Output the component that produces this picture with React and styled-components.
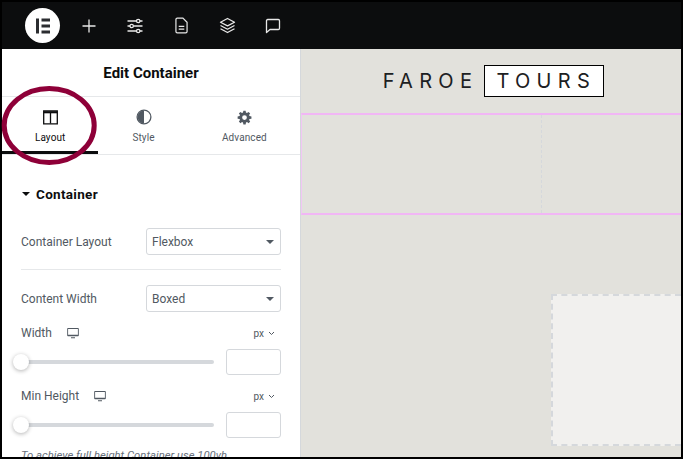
import React from 'react'
import styled, { createGlobalStyle } from 'styled-components'

const Global = createGlobalStyle`
  html, body { margin: 0; padding: 0; background: #000; }
  * { box-sizing: border-box; }
  body { font-family: Roboto, "Liberation Sans", sans-serif; }
`

const Frame = styled.div`
  position: relative;
  width: 683px;
  height: 459px;
  overflow: hidden;
  display: flex;
  flex-direction: column;
  padding: 2px 2px 2px 2px;
  background: #000;
`

const TopBar = styled.div`
  height: 47px;
  flex: none;
  background: #0c0d0e;
  display: flex;
  align-items: center;
  padding-left: 23px;
`

const Logo = styled.div`
  width: 35px;
  height: 35px;
  border-radius: 50%;
  background: #fff;
  display: flex;
  align-items: center;
  justify-content: center;
  margin-right: 19px;
`

const BarIcon = styled.div`
  width: 20px;
  height: 20px;
  margin-right: 26px;
  display: flex;
  align-items: center;
  justify-content: center;
  color: #e8e8e8;
`

const Main = styled.div`
  flex: 1;
  min-height: 0;
  display: flex;
`

const Panel = styled.div`
  width: 299px;
  flex: none;
  background: #fff;
  border-right: 1px solid #d5d8dc;
  overflow: hidden;
`

const PanelTitle = styled.div`
  height: 48px;
  display: flex;
  align-items: center;
  justify-content: center;
  font-size: 15px;
  font-weight: 700;
  color: #0c0d0e;
  border-bottom: 1px solid #e6e8ea;
`

const Tabs = styled.div`
  height: 58px;
  display: flex;
  border-bottom: 1px solid #e6e8ea;
`

const Tab = styled.div`
  width: ${p => p.$w}px;
  height: 57px;
  display: flex;
  flex-direction: column;
  align-items: center;
  padding-top: 12px;
  gap: 7px;
  font-size: 10px;
  letter-spacing: 0.1px;
  color: ${p => (p.$active ? '#0c0d0e' : '#515962')};
  border-bottom: ${p => (p.$active ? '3px solid #0c0d0e' : 'none')};
`

const TabIcon = styled.div`
  height: 16px;
  display: flex;
  align-items: center;
`

const Section = styled.div`
  padding: 0 19px;
`

const SectionHead = styled.div`
  height: 26px;
  margin-top: 26px;
  display: flex;
  align-items: center;
  gap: 6px;
  font-size: 13.5px;
  font-weight: 700;
  letter-spacing: 0.3px;
  color: #0c0d0e;
`

const Caret = styled.span`
  width: 0;
  height: 0;
  margin-left: 1px;
  border-left: 4px solid transparent;
  border-right: 4px solid transparent;
  border-top: 4px solid ${p => p.$c || '#0c0d0e'};
`

const Row = styled.div`
  display: flex;
  align-items: center;
  justify-content: space-between;
  margin-top: ${p => p.$mt}px;
  font-size: 12px;
  color: #515962;
`

const Select = styled.div`
  width: 135px;
  height: 27px;
  border: 1px solid #d5d8dc;
  border-radius: 3px;
  display: flex;
  align-items: center;
  justify-content: space-between;
  padding: 0 6px 0 5px;
  font-size: 12px;
  color: #515962;
`

const Divider = styled.div`
  height: 1px;
  background: #e6e8ea;
  margin-top: 14px;
`

const LabelRow = styled.div`
  display: flex;
  align-items: center;
  justify-content: space-between;
  margin-top: ${p => p.$mt}px;
  height: 16px;
  font-size: 12px;
  color: #515962;
`

const LabelLeft = styled.div`
  display: flex;
  align-items: center;
  gap: ${p => p.$gap}px;
`

const Unit = styled.div`
  display: flex;
  align-items: center;
  gap: 4px;
  font-size: 10px;
  color: #515962;
  padding-right: 6px;
`

const SliderRow = styled.div`
  display: flex;
  align-items: center;
  justify-content: space-between;
  margin-top: 8px;
`

const Track = styled.div`
  position: relative;
  width: 193px;
  height: 4px;
  border-radius: 2px;
  background: #d5d8dc;
`

const Thumb = styled.div`
  position: absolute;
  left: -8px;
  top: -6px;
  width: 16px;
  height: 16px;
  border-radius: 50%;
  background: #fff;
  box-shadow: 0 1px 4px rgba(0, 0, 0, 0.3);
`

const NumberBox = styled.div`
  width: 55px;
  height: 26px;
  border: 1px solid #d5d8dc;
  border-radius: 3px;
`

const Hint = styled.div`
  margin-top: 11px;
  font-size: 11.3px;
  font-style: italic;
  white-space: nowrap;
  color: #69727d;
`

const Canvas = styled.div`
  flex: 1;
  min-width: 0;
  background: #e2e1dc;
  display: flex;
  flex-direction: column;
`

const Brand = styled.div`
  height: 64px;
  flex: none;
  display: flex;
  align-items: center;
  justify-content: center;
  padding-left: 5px;
  font-family: Inter, "Open Sans", sans-serif;
  font-size: 20px;
  font-weight: 400;
  letter-spacing: 6.3px;
  color: #1c2022;
`

const BrandBox = styled.div`
  margin-left: 6px;
  width: 120px;
  height: 32px;
  display: flex;
  align-items: center;
  justify-content: center;
  padding-left: 4px;
  background: #fff;
  border: 1px solid #000;
`

const SectionBand = styled.div`
  height: 102px;
  flex: none;
  display: grid;
  grid-template-columns: 240px 1fr;
  border-top: 2px solid #f1b6f5;
  border-bottom: 2px solid #f1b6f5;
  border-left: 1px solid #f1c6f5;
`

const Column = styled.div`
  border-right: 1px dashed #d5d8dc;
`

const DropArea = styled.div`
  flex: 1;
  display: flex;
  justify-content: flex-end;
  padding-top: 79px;
`

const DropBox = styled.div`
  width: 130px;
  height: 152px;
  background: #f1f0ee;
  border: 2px dashed #d5d8dc;
  border-right: none;
`

const Annotation = styled.svg`
  position: absolute;
  left: 0;
  top: 84px;
`

const Monitor = () => (
  <svg width="12" height="12" viewBox="0 0 12 12">
    <path fill="#515962" fillRule="evenodd" d="M1 1h10a.8.8 0 0 1 .8.8v6.700a.8.8 0 0 1-.8.8H1a.8.8 0 0 1-.8-.8V1.800A.8.8 0 0 1 1 1zm.1 1v5.800h9.800V2zM4 10.300h4v.9H4z" />
  </svg>
)

const Chevron = () => (
  <svg width="7" height="5" viewBox="0 0 7 5">
    <path d="M1 1l2.500 2.500L6 1" fill="none" stroke="#515962" strokeWidth="1" />
  </svg>
)

const Slider = () => (
  <SliderRow>
    <Track><Thumb /></Track>
    <NumberBox />
  </SliderRow>
)

const App = () => (
  <>
    <Global />
    <Frame>
      <TopBar>
        <Logo>
          <svg width="18" height="18" viewBox="0 0 18 18">
            <path fill="#2b2d30" d="M2 1.500h3v15H2zM7.500 1.500H16v3H7.500zM7.500 7.500H16v3H7.500zM7.500 13.500H16v3H7.500z" />
          </svg>
        </Logo>
        <BarIcon>
          <svg width="16" height="16" viewBox="0 0 16 16">
            <path d="M8 1.500v13M1.500 8h13" stroke="currentColor" strokeWidth="1.300" fill="none" />
          </svg>
        </BarIcon>
        <BarIcon>
          <svg width="18" height="16" viewBox="0 0 18 16" fill="none" stroke="currentColor" strokeWidth="1.300">
            <path d="M1.500 3h9M14 3h2.500M1.500 8h2.500M7.500 8h9M1.500 13h9M14 13h2.500" />
            <circle cx="12.200" cy="3" r="1.700" />
            <circle cx="5.700" cy="8" r="1.700" />
            <circle cx="12.200" cy="13" r="1.700" />
          </svg>
        </BarIcon>
        <BarIcon>
          <svg width="13" height="17" viewBox="0 0 14 18" fill="none" stroke="currentColor" strokeWidth="1.300">
            <path d="M8.500 1H2.500A1.500 1.500 0 0 0 1 2.500v13A1.500 1.500 0 0 0 2.500 17h9a1.500 1.500 0 0 0 1.500-1.500V5.500z" />
            <path d="M4 10h6M4 13h6" />
          </svg>
        </BarIcon>
        <BarIcon>
          <svg width="17" height="17" viewBox="0 0 17 17" fill="none" stroke="currentColor" strokeWidth="1.300" strokeLinejoin="round">
            <path d="M8.500 1.500l7 3.700-7 3.700-7-3.700z" />
            <path d="M1.500 8.500l7 3.700 7-3.700M1.500 11.800l7 3.700 7-3.700" />
          </svg>
        </BarIcon>
        <BarIcon>
          <svg width="16" height="16" viewBox="0 0 16 16" fill="none" stroke="currentColor" strokeWidth="1.300" strokeLinejoin="round">
            <path d="M2.700 1.500h10.600a1.200 1.200 0 0 1 1.200 1.200v7.600a1.200 1.200 0 0 1-1.200 1.200H5L1.500 14.500V2.700a1.200 1.200 0 0 1 1.200-1.200z" />
          </svg>
        </BarIcon>
      </TopBar>
      <Main>
        <Panel>
          <PanelTitle>Edit Container</PanelTitle>
          <Tabs>
            <Tab $active $w={97}>
              <TabIcon>
                <svg width="15" height="15" viewBox="0 0 15 15" fill="none" stroke="#0c0d0e">
                  <path strokeWidth="1.300" d="M.7 1h13.600v12.800H.7z" />
                  <path strokeWidth="2" d="M.7 2.300h13.600" />
                  <path strokeWidth="1.300" d="M7.500 2.500v11" />
                </svg>
              </TabIcon>
              Layout
            </Tab>
            <Tab $w={91}>
              <TabIcon>
                <svg width="16" height="16" viewBox="0 0 16 16">
                  <circle cx="8" cy="8" r="6.900" fill="none" stroke="#515962" strokeWidth="1.300" />
                  <path fill="#515962" d="M8 1.500a6.500 6.500 0 0 0 0 13z" />
                </svg>
              </TabIcon>
              Style
            </Tab>
            <Tab $w={112}>
              <TabIcon>
                <svg width="15" height="15" viewBox="0 0 24 24">
                  <path fill="#515962" fillRule="evenodd" d="M13.800 1h-3.600l-.6 3.100-1.600.7-2.600-1.800L3 5.500l1.800 2.600-.7 1.600-3.100.6v3.600l3.100.6.700 1.600L3 18.500 5.500 21l2.500-1.800 1.600.7.600 3.100h3.600l.6-3.100 1.600-.7 2.600 1.800 2.500-2.500-1.800-2.500.7-1.600 3.100-.6v-3.600l-3.100-.6-.7-1.600L21 5.500 18.500 3l-2.600 1.800-1.600-.7zM12 8.200a3.800 3.800 0 1 1 0 7.600 3.800 3.800 0 0 1 0-7.600z" />
                </svg>
              </TabIcon>
              Advanced
            </Tab>
          </Tabs>
          <Section>
            <SectionHead><Caret />Container</SectionHead>
            <Row $mt={21}>
              Container Layout
              <Select>Flexbox<Caret $c="#515962" /></Select>
            </Row>
            <Divider />
            <Row $mt={15}>
              Content Width
              <Select>Boxed<Caret $c="#515962" /></Select>
            </Row>
            <LabelRow $mt={13}>
              <LabelLeft $gap={15}>Width <Monitor /></LabelLeft>
              <Unit>px <Chevron /></Unit>
            </LabelRow>
            <Slider />
            <LabelRow $mt={13}>
              <LabelLeft $gap={15}>Min Height <Monitor /></LabelLeft>
              <Unit>px <Chevron /></Unit>
            </LabelRow>
            <Slider />
            <Hint>To achieve full height Container use 100vh.</Hint>
          </Section>
        </Panel>
        <Canvas>
          <Brand>
            FAROE
            <BrandBox>TOURS</BrandBox>
          </Brand>
          <SectionBand>
            <Column />
            <div />
          </SectionBand>
          <DropArea>
            <DropBox />
          </DropArea>
        </Canvas>
      </Main>
      <Annotation width="100" height="84" viewBox="0 0 100 84">
        <ellipse cx="49.200" cy="41.500" rx="45" ry="37" fill="none" stroke="#8e0038" strokeWidth="5" />
      </Annotation>
    </Frame>
  </>
)

export default App
